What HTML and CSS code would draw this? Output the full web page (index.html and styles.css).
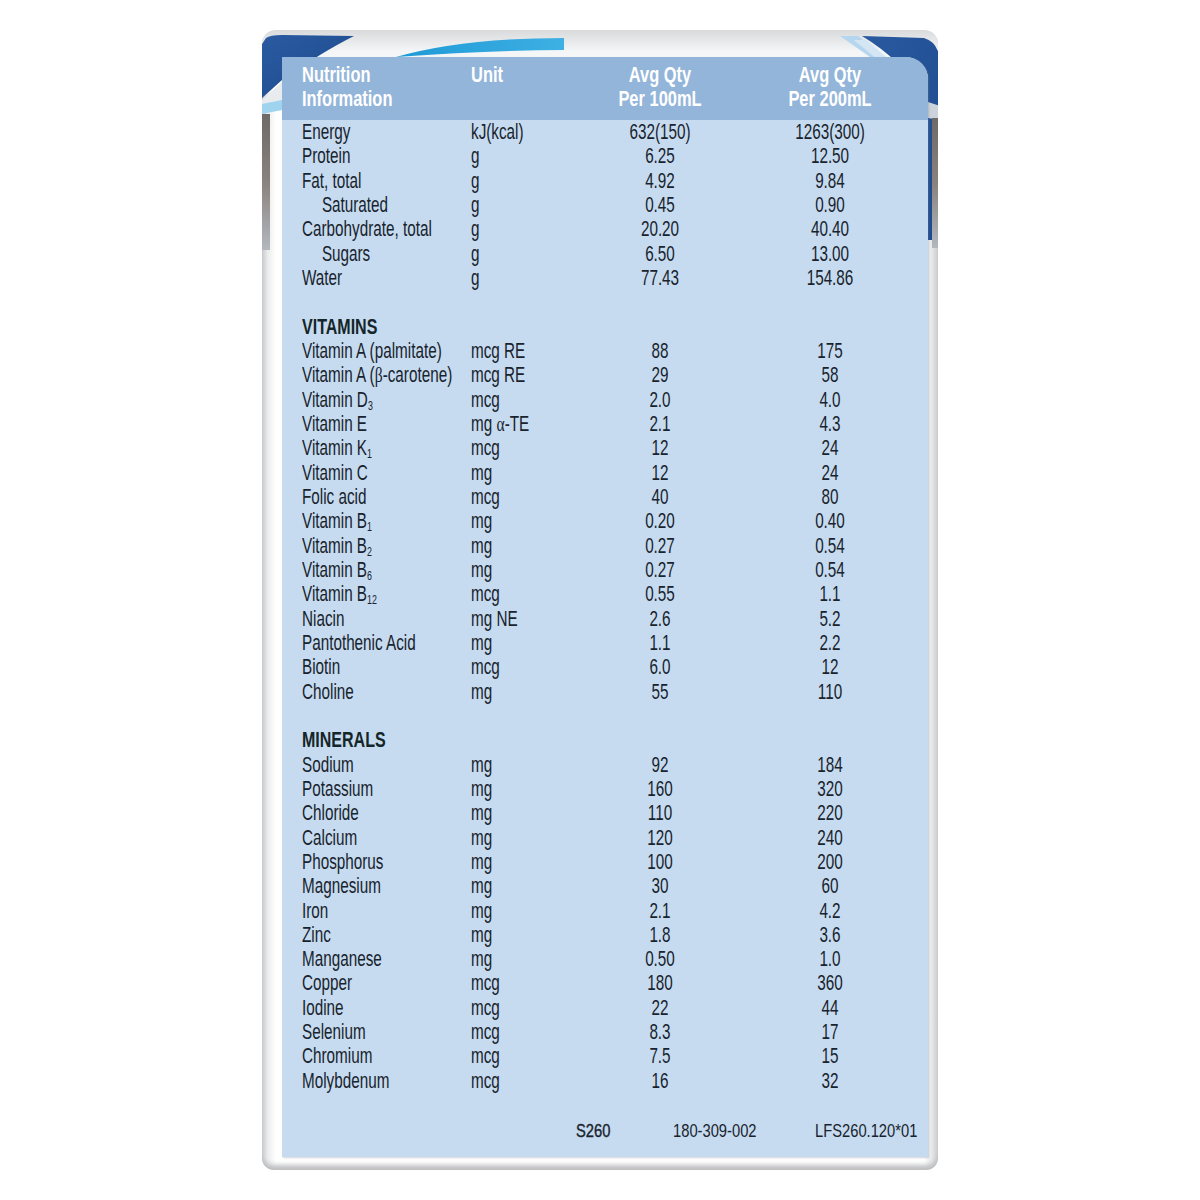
FILE: index.html
```html
<!DOCTYPE html>
<html>
<head>
<meta charset="utf-8">
<link rel="stylesheet" href="styles.css">
</head>
<body>
<div class="carton">
  <svg class="art" width="676" height="1140" viewBox="0 0 676 1140">
    <defs>
      <linearGradient id="topg" x1="0" y1="0" x2="0" y2="1">
        <stop offset="0" stop-color="#d9dadc"/>
        <stop offset="0.35" stop-color="#f4f5f6"/>
        <stop offset="1" stop-color="#ffffff"/>
      </linearGradient>
      <linearGradient id="blueL" x1="0" y1="0" x2="1" y2="1">
        <stop offset="0" stop-color="#2a5aa0"/>
        <stop offset="1" stop-color="#1c4a8e"/>
      </linearGradient>
      <linearGradient id="swoosh" x1="0" y1="0" x2="1" y2="0">
        <stop offset="0" stop-color="#1e9ad6"/>
        <stop offset="1" stop-color="#3eb0e3"/>
      </linearGradient>
      <linearGradient id="edgeL" x1="0" y1="0" x2="0" y2="1">
        <stop offset="0" stop-color="#6e6a68"/>
        <stop offset="0.5" stop-color="#8a827c"/>
        <stop offset="1" stop-color="#b3b8c0"/>
      </linearGradient>
    </defs>
    <rect x="0" y="0" width="676" height="60" fill="url(#topg)"/>
    <path d="M4 8 Q8 5 20 5 L92 6 Q60 22 20 50 L0 68 L0 14 Z" fill="url(#blueL)"/>
    <path d="M0 70 L20 52 L20 80 L0 82 Z" fill="#e9ecef"/>
    <path d="M0 74 L20 70 L20 80 L0 84 Z" fill="#9fd3ee"/>
    <rect x="0" y="84" width="8" height="136" fill="url(#edgeL)"/>
    <path d="M134 27 Q200 8 302 8 L302 20 Q230 20 134 27 Z" fill="url(#swoosh)"/>
    <path d="M600 6 L662 8 Q676 12 678 30 L678 210 L666 210 L666 70 Q640 30 600 6 Z" fill="url(#blueL)"/>
    <path d="M578 6 L596 6 L632 34 L618 34 Z" fill="#b5d6ee"/>
    <path d="M592 10 L604 10 L640 40 L628 40 Z" fill="#d4e6f4"/>
    <path d="M666 72 L678 76 L678 90 L666 88 Z" fill="#cdd3da"/>
    <rect x="670" y="88" width="8" height="130" fill="url(#edgeL)"/>
  </svg>
  <div class="panel">
    <div class="head">
      <div class="h-name">Nutrition<br>Information</div>
      <div class="h-unit">Unit</div>
      <div class="h-qty">Avg Qty<br>Per 100mL</div>
      <div class="h-qty">Avg Qty<br>Per 200mL</div>
    </div>
    <div class="body">
      <div class="row"><span>Energy</span><span>kJ(kcal)</span><span>632(150)</span><span>1263(300)</span></div>
      <div class="row"><span>Protein</span><span>g</span><span>6.25</span><span>12.50</span></div>
      <div class="row"><span>Fat, total</span><span>g</span><span>4.92</span><span>9.84</span></div>
      <div class="row"><span class="ind">Saturated</span><span>g</span><span>0.45</span><span>0.90</span></div>
      <div class="row"><span>Carbohydrate, total</span><span>g</span><span>20.20</span><span>40.40</span></div>
      <div class="row"><span class="ind">Sugars</span><span>g</span><span>6.50</span><span>13.00</span></div>
      <div class="row"><span>Water</span><span>g</span><span>77.43</span><span>154.86</span></div>
      <div class="row blank"></div>
      <div class="row sec"><span>VITAMINS</span></div>
      <div class="row"><span>Vitamin A (palmitate)</span><span>mcg RE</span><span>88</span><span>175</span></div>
      <div class="row"><span>Vitamin A (<i class="gr">β</i>-carotene)</span><span>mcg RE</span><span>29</span><span>58</span></div>
      <div class="row"><span>Vitamin D<sub>3</sub></span><span>mcg</span><span>2.0</span><span>4.0</span></div>
      <div class="row"><span>Vitamin E</span><span>mg <i class="gr">α</i>-TE</span><span>2.1</span><span>4.3</span></div>
      <div class="row"><span>Vitamin K<sub>1</sub></span><span>mcg</span><span>12</span><span>24</span></div>
      <div class="row"><span>Vitamin C</span><span>mg</span><span>12</span><span>24</span></div>
      <div class="row"><span>Folic acid</span><span>mcg</span><span>40</span><span>80</span></div>
      <div class="row"><span>Vitamin B<sub>1</sub></span><span>mg</span><span>0.20</span><span>0.40</span></div>
      <div class="row"><span>Vitamin B<sub>2</sub></span><span>mg</span><span>0.27</span><span>0.54</span></div>
      <div class="row"><span>Vitamin B<sub>6</sub></span><span>mg</span><span>0.27</span><span>0.54</span></div>
      <div class="row"><span>Vitamin B<sub>12</sub></span><span>mcg</span><span>0.55</span><span>1.1</span></div>
      <div class="row"><span>Niacin</span><span>mg NE</span><span>2.6</span><span>5.2</span></div>
      <div class="row"><span>Pantothenic Acid</span><span>mg</span><span>1.1</span><span>2.2</span></div>
      <div class="row"><span>Biotin</span><span>mcg</span><span>6.0</span><span>12</span></div>
      <div class="row"><span>Choline</span><span>mg</span><span>55</span><span>110</span></div>
      <div class="row blank"></div>
      <div class="row sec"><span>MINERALS</span></div>
      <div class="row"><span>Sodium</span><span>mg</span><span>92</span><span>184</span></div>
      <div class="row"><span>Potassium</span><span>mg</span><span>160</span><span>320</span></div>
      <div class="row"><span>Chloride</span><span>mg</span><span>110</span><span>220</span></div>
      <div class="row"><span>Calcium</span><span>mg</span><span>120</span><span>240</span></div>
      <div class="row"><span>Phosphorus</span><span>mg</span><span>100</span><span>200</span></div>
      <div class="row"><span>Magnesium</span><span>mg</span><span>30</span><span>60</span></div>
      <div class="row"><span>Iron</span><span>mg</span><span>2.1</span><span>4.2</span></div>
      <div class="row"><span>Zinc</span><span>mg</span><span>1.8</span><span>3.6</span></div>
      <div class="row"><span>Manganese</span><span>mg</span><span>0.50</span><span>1.0</span></div>
      <div class="row"><span>Copper</span><span>mcg</span><span>180</span><span>360</span></div>
      <div class="row"><span>Iodine</span><span>mcg</span><span>22</span><span>44</span></div>
      <div class="row"><span>Selenium</span><span>mcg</span><span>8.3</span><span>17</span></div>
      <div class="row"><span>Chromium</span><span>mcg</span><span>7.5</span><span>15</span></div>
      <div class="row"><span>Molybdenum</span><span>mcg</span><span>16</span><span>32</span></div>
      <div class="row blank"></div>
      <div class="foot"><span class="code">S260</span><span>180-309-002</span><span>LFS260.120*01</span></div>
    </div>
  </div>
</div>
</body>
</html>
```

FILE: styles.css
```css
html, body {
  margin: 0;
  padding: 0;
  background: #ffffff;
}
body {
  width: 1200px;
  height: 1200px;
  font-family: "Liberation Sans", Arial, sans-serif;
  color: #18232e;
}
.carton {
  position: relative;
  margin: 30px 0 0 262px;
  width: 676px;
  height: 1140px;
  box-sizing: border-box;
  padding: 27px 10px 13px 20px;
  border-radius: 14px 14px 12px 12px;
  background: linear-gradient(to right, #c8c9cb 0, #eceded 6px, #ffffff 14px, #ffffff 662px, #e6e7e8 670px, #c9cacc 676px);
  box-shadow: inset 0 -9px 5px -4px #bdbec0;
  overflow: hidden;
}
.art {
  position: absolute;
  left: 0;
  top: 0;
}
.panel {
  position: relative;
  height: 100%;
  display: flex;
  flex-direction: column;
  background: #c6dbef;
  box-shadow: 1px 1px 2px rgba(120,130,140,0.35);
  border-top-right-radius: 22px;
}
.head {
  display: grid;
  grid-template-columns: 169px 104px 170px 170px;
  padding: 6px 0 0 20px;
  height: 63px;
  box-sizing: border-box;
  background: #93b5d9;
  border-top-right-radius: 22px;
  color: #ffffff;
  font-weight: bold;
  font-size: 21.5px;
  line-height: 24px;
}
.head > div {
  white-space: nowrap;
  transform: scaleX(0.765);
  transform-origin: 0 0;
}
.head > .h-qty {
  text-align: center;
  transform-origin: 50% 0;
}
.body {
  padding: 0 0 0 20px;
}
.row {
  display: grid;
  grid-template-columns: 169px 104px 170px 170px;
  height: 24.33px;
  font-size: 21.5px;
  line-height: 24.33px;
  white-space: nowrap;
}
.row > span {
  display: block;
  transform: scaleX(0.71);
  transform-origin: 0 50%;
}
.row > span:nth-child(3),
.row > span:nth-child(4) {
  text-align: center;
  transform-origin: 50% 50%;
}
.row > span.ind {
  padding-left: 28px;
}
.sec {
  font-weight: bold;
  color: #15262a;
}
.row.sec > span {
  transform: scaleX(0.745);
}
.gr {
  font-style: normal;
  font-family: "Liberation Serif", "DejaVu Serif", serif;
  font-size: 22px;
}
sub {
  font-size: 12.5px;
  line-height: 0;
  vertical-align: -3px;
}
.foot {
  display: grid;
  grid-template-columns: 97px 142px 120px;
  padding: 2px 0 0 274px;
  height: 24.33px;
  line-height: 24.33px;
  font-size: 19px;
  white-space: nowrap;
}
.foot > span {
  display: block;
  transform: scaleX(0.775);
  transform-origin: 0 50%;
}
.foot > .code {
  -webkit-text-stroke: 0.4px #18232e;
}
```
